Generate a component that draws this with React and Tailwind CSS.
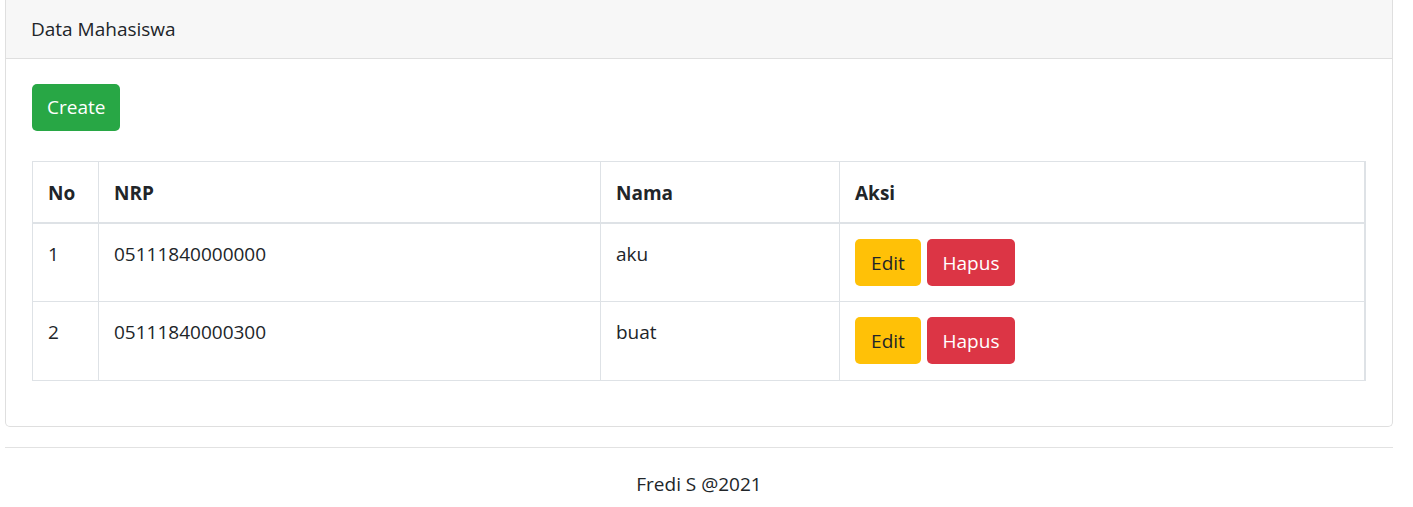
export default function App() {
  const rows = [
    { no: 1, nrp: "05111840000000", nama: "aku", h: "h-[78px]" },
    { no: 2, nrp: "05111840000300", nama: "buat", h: "h-[79px]" },
  ];
  return (
    <div
      className="w-[1413px] bg-white text-[#212529] text-[19px] leading-[28.8px]"
      style={{ fontFamily: '"Open Sans", "Noto Sans", sans-serif' }}
    >
      <div className="ml-[5px] mr-[20px] border border-t-0 border-[#dfdfdf] rounded-b-[5px]">
        <div className="h-[59px] bg-[#f7f7f7] border-b border-[#dfdfdf] px-[25px] flex items-center">
          Data Mahasiswa
        </div>
        <div className="px-[26px] pt-[25px] pb-[45px]">
          <button className="h-[47px] px-[15px] rounded-[5px] bg-[#28a745] text-white">
            Create
          </button>
          <table className="mt-[30px] w-full border-collapse border-r-2 border-[#dee2e6]">
            <colgroup>
              <col className="w-[66px]" />
              <col className="w-[502px]" />
              <col className="w-[239px]" />
              <col />
            </colgroup>
            <thead>
              <tr className="h-[61px]">
                <th className="border border-b-2 border-[#dee2e6] text-left font-bold align-middle px-[15px] pt-[4px]">No</th>
                <th className="border border-b-2 border-[#dee2e6] text-left font-bold align-middle px-[15px] pt-[4px]">NRP</th>
                <th className="border border-b-2 border-[#dee2e6] text-left font-bold align-middle px-[15px] pt-[4px]">Nama</th>
                <th className="border border-b-2 border-[#dee2e6] text-left font-bold align-middle px-[15px] pt-[4px]">Aksi</th>
              </tr>
            </thead>
            <tbody>
              {rows.map((r) => (
                <tr key={r.no} className={r.h}>
                  <td className="border border-[#dee2e6] align-top px-[15px] pt-[16px]">{r.no}</td>
                  <td className="border border-[#dee2e6] align-top px-[15px] pt-[16px]">{r.nrp}</td>
                  <td className="border border-[#dee2e6] align-top px-[15px] pt-[16px]">{r.nama}</td>
                  <td className="border border-[#dee2e6] align-top px-[15px] pt-[15px] pb-[15px]">
                    <div className="flex gap-[6px]">
                      <button className="h-[47px] w-[66px] rounded-[5px] bg-[#ffc107] text-[#212529] pt-[2px]">Edit</button>
                      <button className="h-[47px] w-[88px] rounded-[5px] bg-[#dc3545] text-white pt-[2px]">Hapus</button>
                    </div>
                  </td>
                </tr>
              ))}
            </tbody>
          </table>
        </div>
      </div>
      <div className="ml-[5px] mr-[20px] mt-[20px] border-t border-[#e2e2e2]">
        <div className="text-center pt-[22px] pb-[8px]">Fredi S @2021</div>
      </div>
    </div>
  );
}
